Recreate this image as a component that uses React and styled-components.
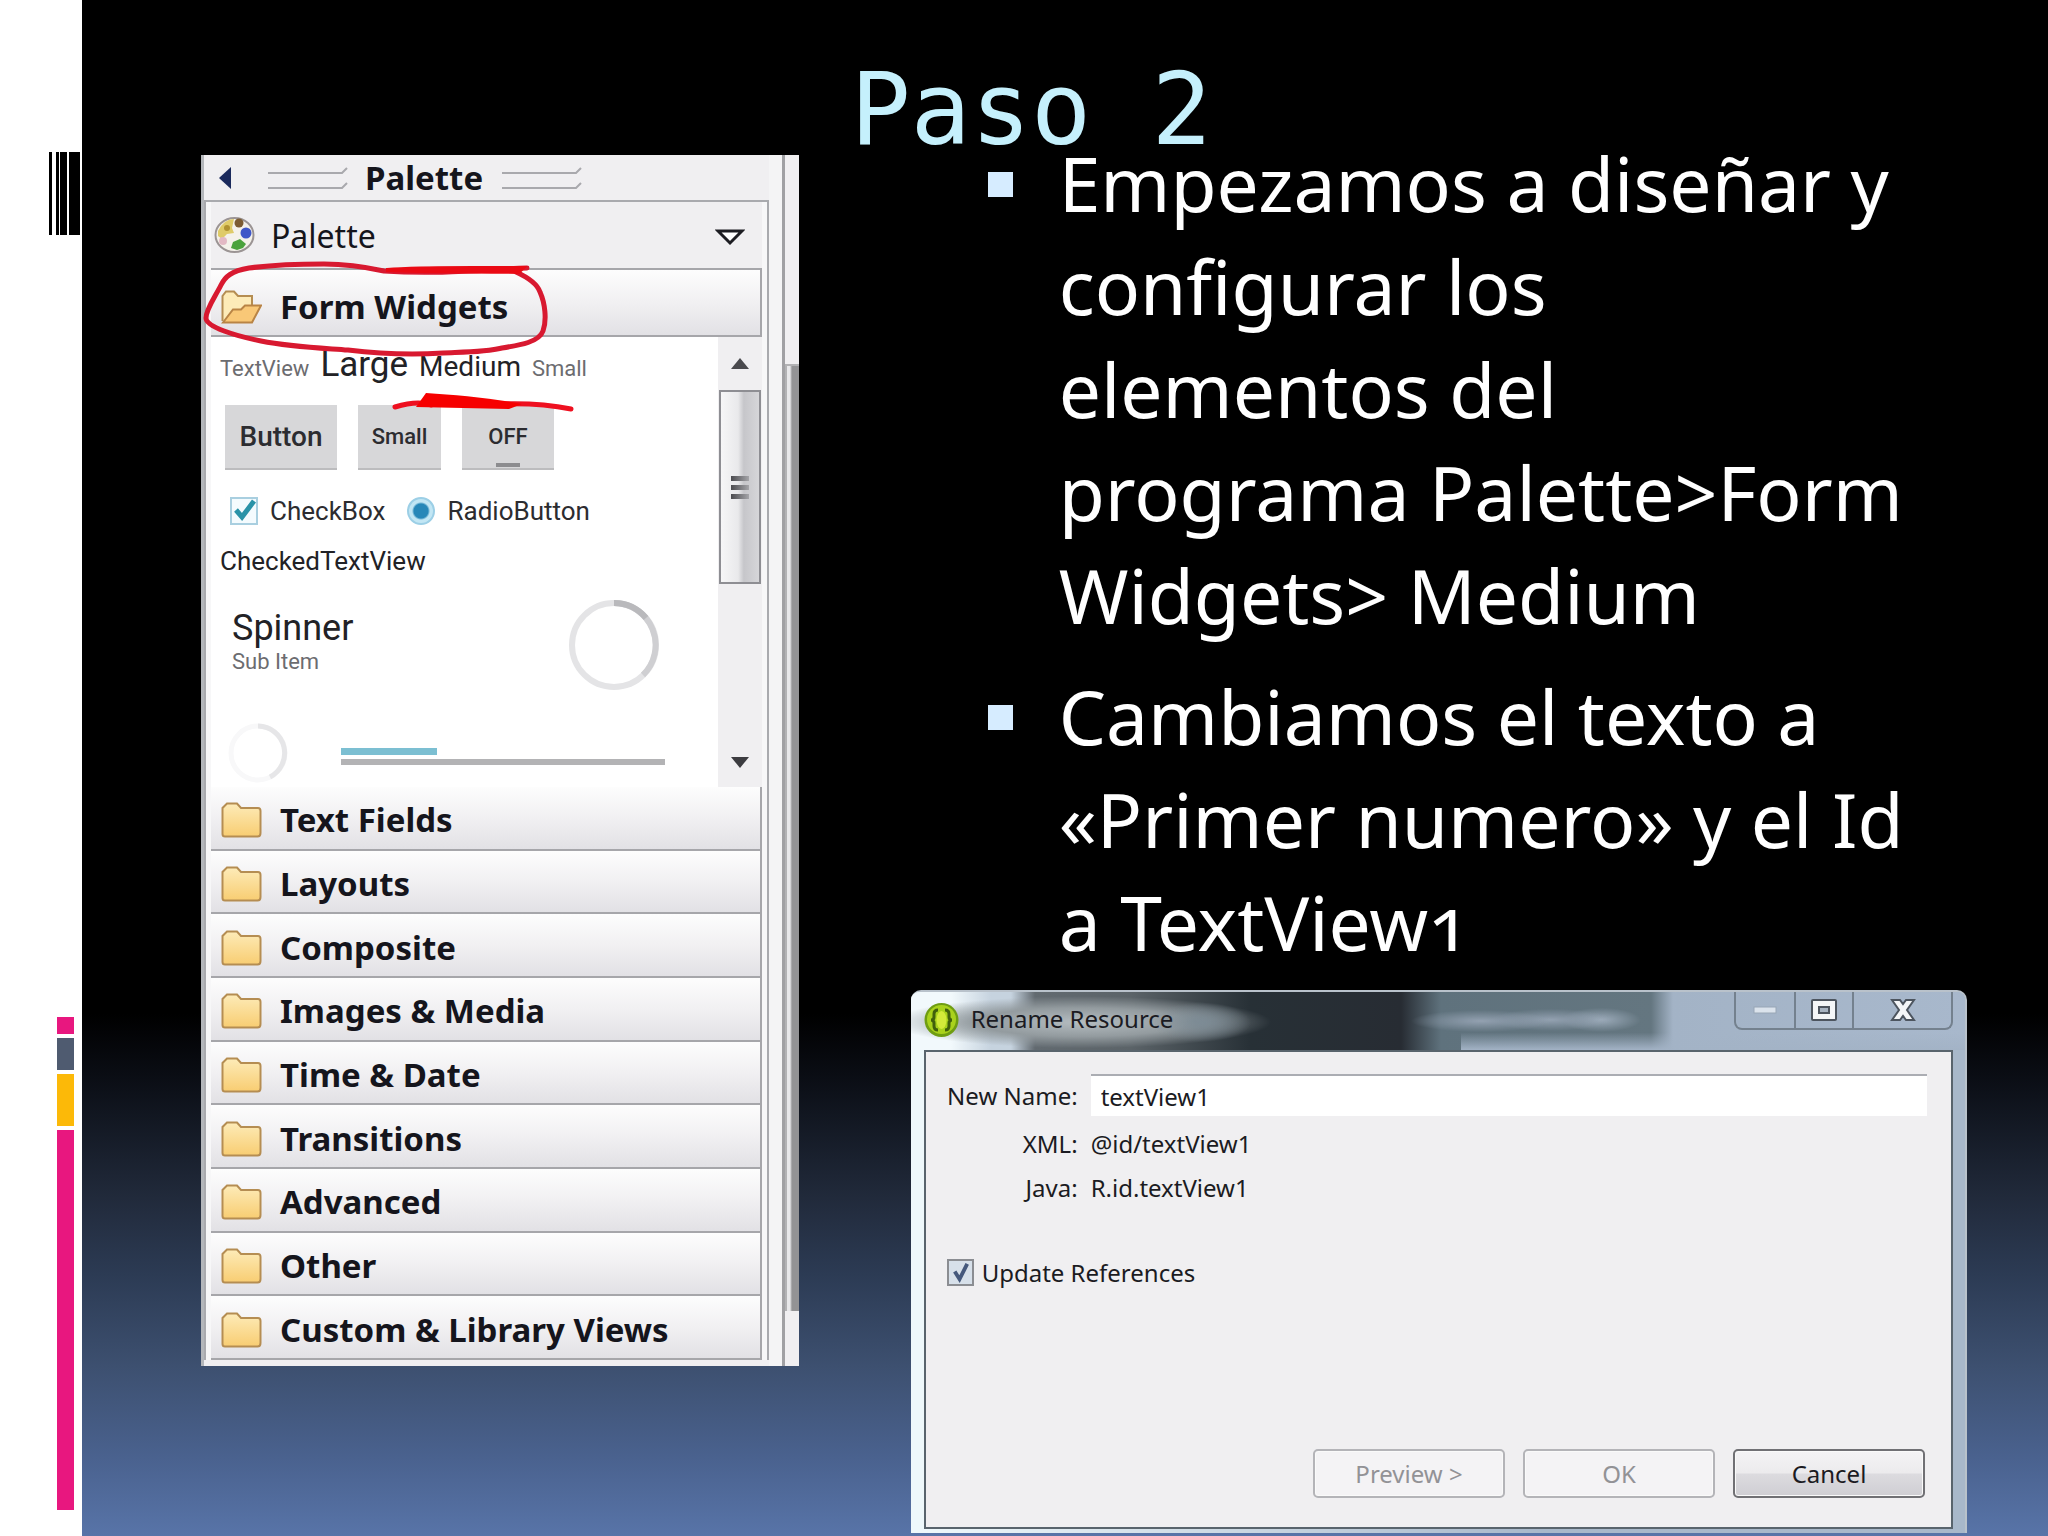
import React, { useState } from 'react';
import styled, { createGlobalStyle } from 'styled-components';

const GlobalStyle = createGlobalStyle`
  * {
    box-sizing: border-box;
  }

  body,
  h1,
  h2,
  h3,
  p,
  ul,
  dl,
  dd {
    margin: 0;
    padding: 0;
  }

  ul {
    list-style: none;
  }

  button,
  input {
    font: inherit;
    color: inherit;
  }
`;

const Slide = styled.div`
  display: flex;
  min-height: 100vh;
  background: linear-gradient(
    #000 66%,
    #0a0d14 70%,
    #212a3b 78%,
    #2c3b54 83%,
    #3d5070 89%,
    #4a628f 95%,
    #5874a8 100%
  );
  font-family: 'Noto Sans', 'Open Sans', sans-serif;
`;

const Rail = styled.aside`
  display: flex;
  flex-direction: column;
  justify-content: space-between;
  align-items: flex-end;
  flex: none;
  width: 82px;
  padding: 152px 0 26px;
  background: #fff;
`;

const Barcode = styled.svg`
  width: 31px;
  height: 83px;
  margin-right: 2px;
`;

const ColorBars = styled.div`
  display: flex;
  flex-direction: column;
  gap: 4px;
  margin-right: 8px;
`;

const ColorBar = styled.div`
  width: 17px;
  height: ${(props) => props.$height}px;
  background: ${(props) => props.$color};
`;

const Main = styled.main`
  flex: 1;
  min-width: 0;
`;

const TitleBar = styled.header`
  padding: 88px 68px 0 0;
  text-align: center;

  h1 {
    font-family: 'DejaVu Sans Mono', monospace;
    font-size: 100px;
    font-weight: 400;
    line-height: 44px;
    color: #c5f0fc;
  }
`;

const Columns = styled.div`
  display: grid;
  grid-template-columns: 598fr 1057fr;
  align-items: start;
  gap: 112px;
  padding: 0 81px 0 119px;
`;

/* ---------- palette ---------- */

const Palette = styled.section`
  position: relative;
  display: flex;
  margin-top: 23px;
  background: #f0eff1;
  color: #15151c;
`;

const PaletteBody = styled.div`
  flex: 1;
  min-width: 0;
  padding-bottom: 6px;
  border-left: 3px solid #b4b7bb;
`;

const PaletteHeader = styled.div`
  display: flex;
  align-items: center;
  height: 45px;
  padding-left: 14px;

  h2 {
    margin: 0 19px 0 16px;
    font-size: 33px;
    line-height: 45px;
  }
`;

const CollapseButton = styled.button`
  display: flex;
  margin-right: 36px;
  padding: 0;
  border: none;
  background: none;
`;

const PaletteFrame = styled.div`
  padding: 0 5px 0 5px;
  border: 2px solid #a9aaae;
  border-bottom: none;
  background: #f7f7f8;
`;

const PaletteTool = styled.div`
  display: flex;
  align-items: center;
  gap: 16px;
  height: 66px;
  padding: 0 17px 0 3px;
  background: #f0eff1;
  font-size: 32px;

  button {
    display: flex;
    margin-left: auto;
    padding: 4px 0 0;
    border: none;
    background: none;
  }
`;

const DrawerButton = styled.button`
  display: flex;
  align-items: center;
  gap: 18px;
  width: 100%;
  min-height: ${(props) => (props.$open ? 69 : 0)}px;
  padding: ${(props) => (props.$open ? 8 : 5)}px 0 0 10px;
  border: solid #a6a6aa;
  border-width: ${(props) => (props.$open ? '2px 2px 2px 0' : '0 2px 2px 0')};
  background: linear-gradient(#fdfdfd, #f1f0f2 50%, #e2e1e5);
  font-size: 33px;
  font-weight: 700;
  line-height: 44px;
  text-align: left;
`;

const DrawerList = styled.div`
  display: grid;
  grid-auto-rows: 1fr;
  height: 573px;
`;

const Drawer = styled.div`
  display: flex;
  background: #fff;
  height: 450px;
`;

const Widgets = styled.div`
  flex: 1;
  padding: 7px 0 0 9px;
  font-family: Roboto, sans-serif;
  color: #2c2c30;
`;

const WidgetRow = styled.div`
  display: flex;
  align-items: ${(props) => props.$align || 'center'};
  gap: ${(props) => props.$gap || 0}px;
  margin-top: ${(props) => props.$top || 0}px;
  padding-left: ${(props) => props.$indent || 0}px;
`;

const Sample = styled.span`
  font-size: ${(props) => props.$size}px;
  line-height: ${(props) => props.$line}px;
  color: ${(props) => (props.$muted ? '#6c6c70' : '#222226')};
`;

const AndroidButton = styled.button`
  display: flex;
  flex-direction: column;
  align-items: center;
  width: ${(props) => props.$width}px;
  height: 65px;
  padding: 15px 0 0;
  border: none;
  border-bottom: 2px solid #bcbcbe;
  background: #d7d7d9;
  font-size: ${(props) => (props.$small ? 22 : 28)}px;
  font-weight: 500;
  line-height: 34px;

  &::after {
    content: '';
    display: ${(props) => (props.$toggle ? 'block' : 'none')};
    width: 24px;
    height: 4px;
    margin-top: 9px;
    background: #8c8c8f;
  }
`;

const Choice = styled.label`
  display: flex;
  align-items: center;
  gap: 12px;
  font-size: 26px;
  line-height: 30px;
`;

const AndroidCheck = styled.input`
  appearance: none;
  width: 28px;
  height: 28px;
  margin: 0;
  border: 2px solid #a9cfe0;
  background: #f4fbfe
    url("data:image/svg+xml,%3Csvg xmlns='http://www.w3.org/2000/svg' viewBox='0 0 24 24'%3E%3Cpath d='M4 11l6 7L22 2' fill='none' stroke='%232a93a8' stroke-width='5'/%3E%3C/svg%3E")
    center / cover;
`;

const AndroidRadio = styled.input`
  appearance: none;
  width: 28px;
  height: 28px;
  margin: 0;
  border: 2px solid #9ccfe6;
  border-radius: 50%;
  background: radial-gradient(#2787b8 0 7px, #c2e6f4 9px);
`;

const SpinnerText = styled.div`
  display: flex;
  flex-direction: column;
  padding-bottom: 8px;
`;

const BigRing = styled.svg`
  width: 92px;
  height: 92px;
  margin: 0 58px 0 auto;
`;

const Progress = styled.div`
  display: flex;
  flex-direction: column;
  gap: 4px;
  width: 324px;
  padding-top: 6px;

  &::before {
    content: '';
    width: 96px;
    height: 7px;
    background: #7cbfd2;
  }

  &::after {
    content: '';
    height: 6px;
    background: #b3b3b5;
  }
`;

const ScrollBar = styled.div`
  display: flex;
  flex-direction: column;
  align-items: center;
  width: 44px;
  padding: 20px 0 18px;
  background: #f0eff1;
`;

const ScrollThumb = styled.div`
  display: flex;
  flex-direction: column;
  justify-content: center;
  align-items: center;
  gap: 4px;
  width: 42px;
  height: 194px;
  margin: 20px 0 auto;
  border: 2px solid #8e8e93;
  background: linear-gradient(90deg, #f6f6f7, #e9e9eb 45%, #c6c6ca 60%, #d6d6d9);

  i {
    width: 18px;
    height: 5px;
    background: linear-gradient(90deg, #4c4c50, #a5a5a9);
  }
`;

const PaletteEdge = styled.div`
  width: 16px;
  border-right: 3px solid #a0a0a3;
  background: #f4f4f5;
`;

const PageScroll = styled.div`
  display: flex;
  flex-direction: column;
  width: 14px;
  padding: 209px 0 55px;

  &::before {
    content: '';
    flex: 1;
    border: solid #b2b2b4;
    border-width: 2px 0 0 2px;
    background: linear-gradient(90deg, #e8e8ea 3px, #939395 5px);
  }
`;

const Markup = styled.svg`
  position: absolute;
  top: 0;
  left: 0;
  width: 598px;
  height: 300px;
  pointer-events: none;
`;

/* ---------- bullets ---------- */

const Steps = styled.ul`
  display: flex;
  flex-direction: column;
  gap: 18px;
  margin-bottom: 16px;
  padding-left: 77px;
  color: #fff;
  font-size: 75px;
  font-variant-numeric: oldstyle-nums;
  line-height: 103px;
  white-space: nowrap;

  li {
    display: flex;
    gap: 46px;
  }

  li::before {
    content: '';
    flex: none;
    width: 25px;
    height: 25px;
    margin-top: 40px;
    background: #d6ecff;
  }
`;

/* ---------- dialog ---------- */

const Dialog = styled.section`
  padding: 0 12px 4px 13px;
  border: solid #b9c2cb;
  border-width: 2px 2px 0 0;
  border-radius: 10px 10px 0 0;
  background: linear-gradient(90deg, #eef8fb 14px, #a8b8ca 60%);
  color: #1b1b22;
  font-size: 24px;
  line-height: 33px;
`;

const DialogTitle = styled.div`
  display: flex;
  align-items: flex-start;
  gap: 12px;
  height: 58px;
  margin: 0 -12px 0 -13px;
  padding: 0 12px 0 13px;
  border-radius: 8px 8px 0 0;
  background:
    radial-gradient(ellipse 50px 20px at 290px 52%, #7c8b95, #7c8b9500),
    radial-gradient(ellipse 190px 26px at 170px 52%, #b4bcc0, #939b9f 55%, #939b9f00),
    radial-gradient(ellipse 70px 11px at 570px 50%, #93a1b1, #93a1b100),
    radial-gradient(ellipse 60px 11px at 640px 48%, #93a1b1, #93a1b100),
    radial-gradient(ellipse 40px 12px at 690px 48%, #9cabba, #9cabba00),
    linear-gradient(#a3b3c600 70%, #a3b3c6 100%) 550px 0 / 600px 100% no-repeat,
    linear-gradient(
      90deg,
      #f2f9fc 0 40px,
      #c6d3df 80px 100px,
      #626a70 124px,
      #5b6368 220px,
      #273036 340px,
      #272c33 490px,
      #5f727d 530px,
      #647680 740px,
      #a3b3c6 762px,
      #a8b8cc 100%
    );

  svg {
    flex: none;
  }

  h2 {
    margin-top: 10px;
    font-size: 24px;
    font-weight: 400;
    line-height: 33px;
  }
`;

const DialogIcon = styled.svg`
  width: 35px;
  height: 36px;
  margin-top: 10px;
`;

const WindowButtons = styled.div`
  display: flex;
  height: 38px;
  margin-left: auto;
  border: 2px solid #74818e;
  border-top: none;
  border-radius: 0 0 8px 8px;
`;

const WindowButton = styled.button`
  display: flex;
  justify-content: center;
  align-items: center;
  width: ${(props) => props.$width}px;
  padding: 0;
  border: none;
  background: none;

  & + & {
    border-left: 2px solid #74818e;
  }
`;

const DialogForm = styled.form`
  display: flex;
  flex-direction: column;
  min-height: 479px;
  padding: 22px 24px 29px 21px;
  border: 2px solid #59646d;
  background: #f0eff1;
`;

const Fields = styled.div`
  display: grid;
  grid-template-columns: 131px 1fr;
  align-items: center;
  gap: 11px 13px;
`;

const FieldLabel = styled.label`
  text-align: right;
  white-space: nowrap;
`;

const TextInput = styled.input`
  width: 100%;
  height: 42px;
  padding: 0 10px;
  border: none;
  border-top: 2px solid #abadb3;
  background: #fff;
`;

const UpdateLabel = styled.label`
  display: flex;
  align-items: center;
  gap: 8px;
  margin-top: 52px;
`;

const UpdateCheck = styled.input`
  appearance: none;
  width: 27px;
  height: 27px;
  margin: 0;
  border: 2px solid #8b8d92;
  background: #dfe6ee;

  &:checked {
    background: #d7e0ea
      url("data:image/svg+xml,%3Csvg xmlns='http://www.w3.org/2000/svg' viewBox='0 0 24 24'%3E%3Cpath d='M6 11l5 8L19 3' fill='none' stroke='%2345587c' stroke-width='4'/%3E%3C/svg%3E")
      center / cover;
  }
`;

const Actions = styled.div`
  display: flex;
  justify-content: flex-end;
  gap: 18px;
  margin-top: auto;
  padding-right: 2px;
`;

const ActionButton = styled.button`
  width: 192px;
  height: 49px;
  border: 2px solid #707074;
  border-radius: 5px;
  background: linear-gradient(#f4f3f5, #ecebed 48%, #dcdbdf 52%, #cfced3);
  box-shadow: inset 0 0 0 1px #fafafa;

  &:disabled {
    border-color: #b4b4b8;
    background: #f4f3f5;
    color: #929296;
  }
`;

const drawers = [
  'Text Fields',
  'Layouts',
  'Composite',
  'Images & Media',
  'Time & Date',
  'Transitions',
  'Advanced',
  'Other',
  'Custom & Library Views',
];

const FolderIcon = () => (
  <svg width='41' height='36' viewBox='0 0 41 36'>
    <defs>
      <linearGradient id='folder' x2='0' y2='1'>
        <stop offset='0' stopColor='#fdebb8' />
        <stop offset='1' stopColor='#f8cd72' />
      </linearGradient>
    </defs>
    <path
      d='M1.500 32V6L6 1.500h10L20 6h17q2.500 0 2.500 3v22q0 3.500-3 3.500H4q-2.500 0-2.500-2.500z'
      fill='url(#folder)'
      stroke='#b58d52'
      strokeWidth='2'
    />
  </svg>
);

const OpenFolderIcon = () => (
  <svg width='41' height='36' viewBox='0 0 41 36'>
    <path
      d='M1.500 32V7L5 2.500h8L17 7h14v9'
      fill='#fdebb8'
      stroke='#b58d52'
      strokeWidth='2'
    />
    <path
      d='M2 33.500l10-13h8l4-4h16l-9 17z'
      fill='#f9c877'
      stroke='#b98445'
      strokeWidth='2'
    />
  </svg>
);

const PaletteIcon = () => (
  <svg width='41' height='38' viewBox='0 0 41 38'>
    <ellipse cx='20.500' cy='19' rx='19' ry='17' fill='#f4f1ea' stroke='#9b9494' strokeWidth='2' />
    <path d='M4 15Q10 3 20 3l-2 9 2 5-7 1-5 5-4-3z' fill='#dfcb68' />
    <circle cx='25' cy='7' r='4.500' fill='#7c5c33' />
    <circle cx='13' cy='12' r='3' fill='#b09231' />
    <circle cx='32' cy='17' r='5.500' fill='#3f56c8' />
    <path d='M17 32l2-6 7-3 6 5-3 4-6 2z' fill='#4ba23c' />
    <circle cx='9' cy='25' r='4' fill='#e3b9c4' />
  </svg>
);

const GripLines = () => (
  <svg width='81' height='26' viewBox='0 0 81 26' fill='none' stroke='#a9a9ad' strokeWidth='2'>
    <path d='M0 8h74l5-5M0 23h74l5-5' />
  </svg>
);

const PalettePanel = () => (
  <Palette>
    <PaletteBody>
      <PaletteHeader>
        <CollapseButton type='button' aria-label='Collapse'>
          <svg width='14' height='24' viewBox='0 0 14 24'>
            <path d='M13 1v22L1 12z' fill='#1b2a5c' />
          </svg>
        </CollapseButton>
        <GripLines />
        <h2>Palette</h2>
        <GripLines />
      </PaletteHeader>
      <PaletteFrame>
        <PaletteTool>
          <PaletteIcon />
          Palette
          <button type='button' aria-label='Palette menu'>
            <svg width='30' height='17' viewBox='0 0 30 17'>
              <path d='M3 2h24L15 14z' fill='#fff' stroke='#1d1d22' strokeWidth='3' />
            </svg>
          </button>
        </PaletteTool>
        <DrawerButton type='button' $open>
          <OpenFolderIcon />
          Form Widgets
        </DrawerButton>
        <Drawer>
          <Widgets>
            <WidgetRow $align='baseline' $gap={11}>
              <Sample $size={22} $line={26} $muted>TextView</Sample>
              <Sample $size={35} $line={41}>Large</Sample>
              <Sample $size={28} $line={32}>Medium</Sample>
              <Sample $size={22} $line={26} $muted>Small</Sample>
            </WidgetRow>
            <WidgetRow $top={20} $gap={21} $indent={5}>
              <AndroidButton type='button' $width={112}>Button</AndroidButton>
              <AndroidButton type='button' $width={83} $small>Small</AndroidButton>
              <AndroidButton type='button' $width={92} $small $toggle>OFF</AndroidButton>
            </WidgetRow>
            <WidgetRow $top={26} $gap={22} $indent={10}>
              <Choice>
                <AndroidCheck type='checkbox' defaultChecked />
                CheckBox
              </Choice>
              <Choice>
                <AndroidRadio type='radio' defaultChecked />
                RadioButton
              </Choice>
            </WidgetRow>
            <WidgetRow $top={20}>
              <Sample $size={26} $line={30}>CheckedTextView</Sample>
            </WidgetRow>
            <WidgetRow $top={23} $indent={12}>
              <SpinnerText>
                <Sample $size={36} $line={42}>Spinner</Sample>
                <Sample $size={22} $line={26} $muted>Sub Item</Sample>
              </SpinnerText>
              <BigRing viewBox='0 0 92 92' fill='none' strokeWidth='6'>
                <circle cx='46' cy='46' r='42' stroke='#e4e4e6' />
                <path d='M46 4a42 42 0 0 1 29 72' stroke='#cfcfd2' />
                <path d='M46 4a42 42 0 0 1 32 15' stroke='#b9b9bc' />
              </BigRing>
            </WidgetRow>
            <WidgetRow $top={32} $gap={53} $indent={8}>
              <svg width='60' height='60' viewBox='0 0 60 60' fill='none' strokeWidth='5'>
                <circle cx='30' cy='30' r='27' stroke='#f8f8f9' />
                <path d='M30 3a27 27 0 0 1 12 51' stroke='#e6e6e8' />
              </svg>
              <Progress />
            </WidgetRow>
          </Widgets>
          <ScrollBar>
            <svg width='20' height='13' viewBox='0 0 20 13'>
              <path d='M10 1l9 11H1z' fill='#4a4a4e' />
            </svg>
            <ScrollThumb>
              <i />
              <i />
              <i />
            </ScrollThumb>
            <svg width='20' height='13' viewBox='0 0 20 13'>
              <path d='M1 1h18l-9 11z' fill='#3c3c40' />
            </svg>
          </ScrollBar>
        </Drawer>
        <DrawerList>
          {drawers.map((name) => (
            <DrawerButton type='button' key={name}>
              <FolderIcon />
              {name}
            </DrawerButton>
          ))}
        </DrawerList>
      </PaletteFrame>
    </PaletteBody>
    <PaletteEdge />
    <PageScroll />
    <Markup viewBox='0 0 598 300' fill='none' strokeLinecap='round'>
      <path
        d='M326 113C290 114 240 120 183 116C160 111 140 109 123 109C95 109 70 110 48 113C30 116 24 122 20 130C14 142 5 154 5 163C5 172 35 181 60 186C90 192 120 193 147 195C180 199 210 200 242 198C265 197 285 197 301 193C320 190 338 187 342 176C346 165 344 148 339 137C336 128 326 122 315 117'
        stroke='#d81930'
        strokeWidth='5'
      />
      <path d='M186 114C220 111 260 112 324 112L318 118C280 117 230 118 186 116z' fill='#ea0a14' stroke='#ea0a14' strokeWidth='2' />
      <path d='M194 252C210 247 222 247 230 250M300 249C330 248 350 250 370 254' stroke='#ee1020' strokeWidth='5' />
      <path d='M225 238C255 240 290 243 321 249L308 254L215 252z' fill='#f60000' />
    </Markup>
  </Palette>
);

const RenameDialog = () => {
  const [name, setName] = useState('textView1');

  return (
    <Dialog>
      <DialogTitle>
        <DialogIcon viewBox='0 0 35 36'>
          <circle cx='17.500' cy='18' r='17' fill='#6f9d12' />
          <circle cx='17.500' cy='17.500' r='14.500' fill='#a9d21c' />
          <ellipse cx='17.500' cy='18' rx='5' ry='9' fill='#d3ea3a' />
          <path
            d='M14 8q-4 0-4 4v3q0 3-3 3q3 0 3 3v3q0 4 4 4M21 8q4 0 4 4v3q0 3 3 3q-3 0-3 3v3q0 4-4 4'
            fill='none'
            stroke='#41600c'
            strokeWidth='3'
          />
        </DialogIcon>
        <h2>Rename Resource</h2>
        <WindowButtons>
          <WindowButton type='button' aria-label='Minimize' $width={58}>
            <svg width='24' height='8' viewBox='0 0 24 8'>
              <rect x='1' y='1' width='22' height='6' fill='#dbe3ec' stroke='#98a6b5' />
            </svg>
          </WindowButton>
          <WindowButton type='button' aria-label='Maximize' $width={58}>
            <svg width='26' height='22' viewBox='0 0 26 22'>
              <rect x='1' y='1' width='24' height='20' rx='1' fill='#f4f6f8' stroke='#4d555f' strokeWidth='2' />
              <rect x='8' y='8' width='10' height='6' fill='#a8b4c2' stroke='#4d555f' strokeWidth='2' />
            </svg>
          </WindowButton>
          <WindowButton type='button' aria-label='Close' $width={99}>
            <svg width='26' height='24' viewBox='0 0 26 24'>
              <path
                d='M2 2h8l3 4 3-4h8l-7 10 7 10h-8l-3-4-3 4H2l7-10z'
                fill='#f4f6f8'
                stroke='#4d555f'
                strokeWidth='2'
              />
            </svg>
          </WindowButton>
        </WindowButtons>
      </DialogTitle>
      <DialogForm onSubmit={(e) => e.preventDefault()}>
        <Fields>
          <FieldLabel htmlFor='new-name'>New Name:</FieldLabel>
          <TextInput
            id='new-name'
            type='text'
            value={name}
            onChange={(e) => setName(e.target.value)}
          />
          <FieldLabel as='span'>XML:</FieldLabel>
          <span>@id/{name}</span>
          <FieldLabel as='span'>Java:</FieldLabel>
          <span>R.id.{name}</span>
        </Fields>
        <UpdateLabel>
          <UpdateCheck type='checkbox' defaultChecked />
          Update References
        </UpdateLabel>
        <Actions>
          <ActionButton type='button' disabled>Preview &gt;</ActionButton>
          <ActionButton type='submit' disabled>OK</ActionButton>
          <ActionButton type='button'>Cancel</ActionButton>
        </Actions>
      </DialogForm>
    </Dialog>
  );
};

const App = () => {
  return (
    <>
      <GlobalStyle />
      <Slide>
        <Rail>
          <Barcode viewBox='0 0 31 83'>
            <path d='M0 0h3v83H0zM7 0h3v83H7zM11 0h7v83h-7zM20 0h11v83H20z' />
          </Barcode>
          <ColorBars>
            <ColorBar $height={17} $color='#e8177f' />
            <ColorBar $height={32} $color='#4f5b70' />
            <ColorBar $height={52} $color='#fcb908' />
            <ColorBar $height={380} $color='#e8177f' />
          </ColorBars>
        </Rail>
        <Main>
          <TitleBar>
            <h1>Paso 2</h1>
          </TitleBar>
          <Columns>
            <PalettePanel />
            <div>
              <Steps>
                <li>
                  <p>
                    Empezamos a diseñar y<br />
                    configurar los<br />
                    elementos del<br />
                    programa Palette&gt;Form<br />
                    Widgets&gt; Medium
                  </p>
                </li>
                <li>
                  <p>
                    Cambiamos el texto a<br />
                    «Primer numero» y el Id<br />
                    a TextView1
                  </p>
                </li>
              </Steps>
              <RenameDialog />
            </div>
          </Columns>
        </Main>
      </Slide>
    </>
  );
};

export default App;
